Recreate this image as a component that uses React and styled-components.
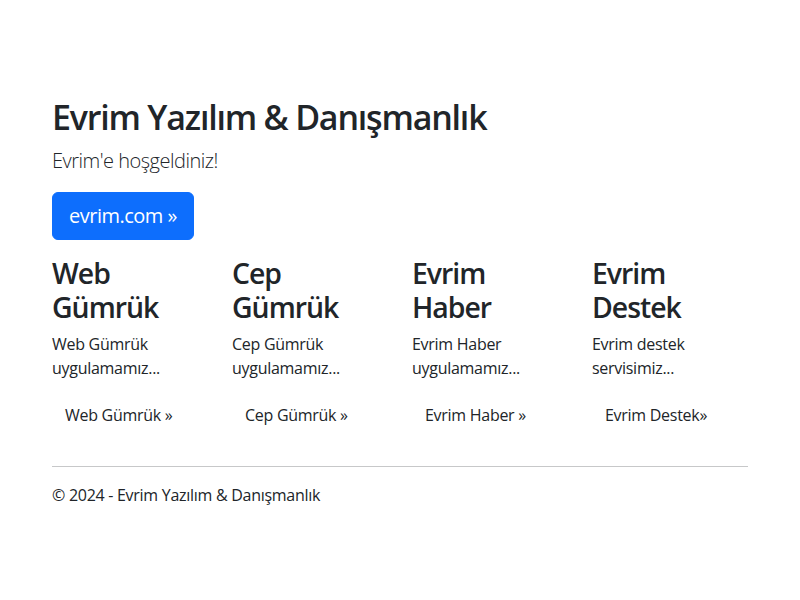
import React from 'react'
import styled, { createGlobalStyle } from 'styled-components'

const GlobalStyle = createGlobalStyle`
  *, *::before, *::after { box-sizing: border-box; }
  body {
    margin: 0;
    background: #fff;
    color: #212529;
    font-family: "Open Sans", "Noto Sans", sans-serif;
    font-size: 16px;
    line-height: 1.5;
    letter-spacing: -0.28px;
  }
`

const Container = styled.div`
  width: 720px;
  margin: 0 auto;
  padding: 97px 12px 0;
`

const Title = styled.h1`
  margin: 0 0 8px;
  font-size: 34px;
  font-weight: 600;
  line-height: 1.2;
  letter-spacing: -1.2px;
`

const Lead = styled.p`
  margin: 0 0 16px;
  font-size: 20px;
  font-weight: 300;
  letter-spacing: -0.5px;
`

const ActionRow = styled.p`
  margin: 0 0 16px;
`

const PrimaryButton = styled.a`
  display: inline-block;
  padding: 8px 16px;
  font-size: 20px;
  line-height: 1.5;
  letter-spacing: -0.5px;
  color: #fff;
  background-color: #0d6efd;
  border: 1px solid #0d6efd;
  border-radius: 6px;
  text-decoration: none;
  cursor: pointer;
`

const Row = styled.div`
  display: grid;
  grid-template-columns: repeat(4, 1fr);
  column-gap: 24px;
`

const Column = styled.div``

const ColumnTitle = styled.h2`
  margin: 0 0 8px;
  font-size: 28.4px;
  font-weight: 600;
  line-height: 1.2;
  letter-spacing: -1px;
`

const ColumnText = styled.p`
  margin: 0 0 16px;
  width: 140px;
`

const LinkButton = styled.a`
  display: inline-block;
  padding: 6px 12px;
  border: 1px solid transparent;
  color: #212529;
  text-decoration: none;
  cursor: pointer;
`

const Divider = styled.hr`
  margin: 16px 0;
  border: 0;
  border-top: 1px solid #212529;
  opacity: 0.25;
`

const Footer = styled.footer`
  p { margin: 0 0 16px; }
`

const items = [
  { title: ['Web', 'Gümrük'], text: 'Web Gümrük uygulamamız...', link: 'Web Gümrük »' },
  { title: ['Cep', 'Gümrük'], text: 'Cep Gümrük uygulamamız...', link: 'Cep Gümrük »' },
  { title: ['Evrim', 'Haber'], text: 'Evrim Haber uygulamamız...', link: 'Evrim Haber »' },
  { title: ['Evrim', 'Destek'], text: 'Evrim destek servisimiz...', link: 'Evrim Destek»' },
]

export default function App() {
  return (
    <>
      <GlobalStyle />
      <Container>
        <Title>Evrim Yazılım &amp; Danışmanlık</Title>
        <Lead>Evrim'e hoşgeldiniz!</Lead>
        <ActionRow>
          <PrimaryButton>evrim.com »</PrimaryButton>
        </ActionRow>
        <Row>
          {items.map((item) => (
            <Column key={item.link}>
              <ColumnTitle>{item.title[0]}<br />{item.title[1]}</ColumnTitle>
              <ColumnText>{item.text}</ColumnText>
              <ActionRow>
                <LinkButton>{item.link}</LinkButton>
              </ActionRow>
            </Column>
          ))}
        </Row>
        <Divider />
        <Footer>
          <p>© 2024 - Evrim Yazılım &amp; Danışmanlık</p>
        </Footer>
      </Container>
    </>
  )
}
